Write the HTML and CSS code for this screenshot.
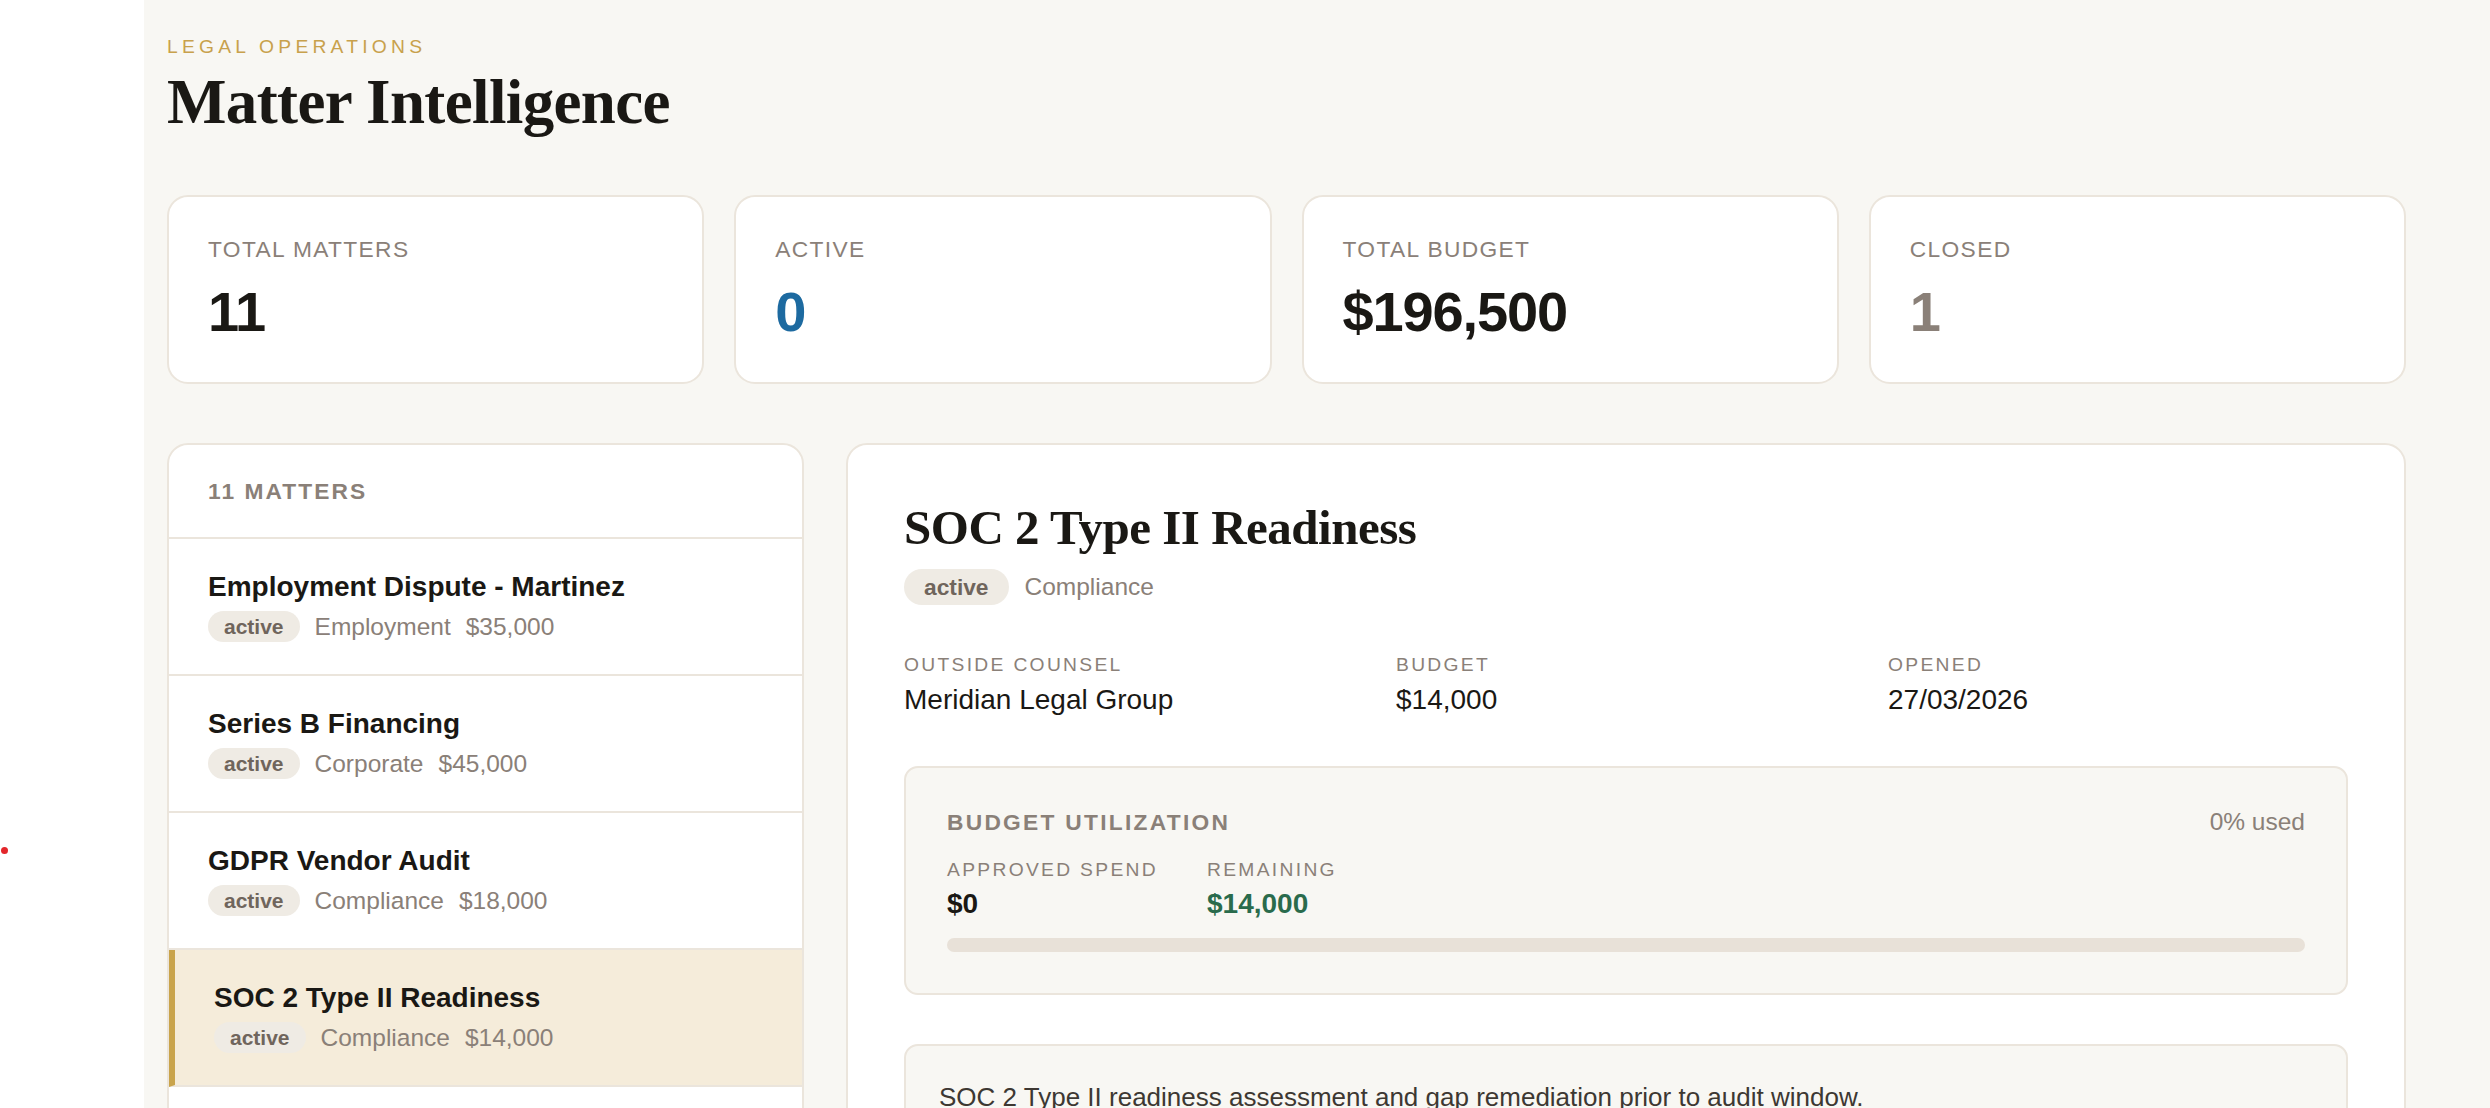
FILE: index.html
```html
<!DOCTYPE html>
<html lang="en">
<head>
<meta charset="utf-8">
<title>Matter Intelligence</title>
<link rel="stylesheet" href="styles.css">
</head>
<body>
  <aside class="sidebar"></aside>
  <main class="main">
    <div class="content">
      <header class="page-head">
        <p class="eyebrow">Legal Operations</p>
        <h1 class="page-title">Matter Intelligence</h1>
      </header>

      <section class="stats">
        <div class="stat-card">
          <div class="stat-label">Total Matters</div>
          <div class="stat-value">11</div>
        </div>
        <div class="stat-card">
          <div class="stat-label">Active</div>
          <div class="stat-value stat-value--blue">0</div>
        </div>
        <div class="stat-card">
          <div class="stat-label">Total Budget</div>
          <div class="stat-value">$196,500</div>
        </div>
        <div class="stat-card">
          <div class="stat-label">Closed</div>
          <div class="stat-value stat-value--muted">1</div>
        </div>
      </section>

      <section class="workspace">
        <div class="matter-list">
          <div class="list-head">11 Matters</div>
          <div class="matter-item">
            <div class="matter-name">Employment Dispute - Martinez</div>
            <div class="matter-meta"><span class="badge">active</span><span>Employment</span><span>$35,000</span></div>
          </div>
          <div class="matter-item">
            <div class="matter-name">Series B Financing</div>
            <div class="matter-meta"><span class="badge">active</span><span>Corporate</span><span>$45,000</span></div>
          </div>
          <div class="matter-item">
            <div class="matter-name">GDPR Vendor Audit</div>
            <div class="matter-meta"><span class="badge">active</span><span>Compliance</span><span>$18,000</span></div>
          </div>
          <div class="matter-item matter-item--selected">
            <div class="matter-name">SOC 2 Type II Readiness</div>
            <div class="matter-meta"><span class="badge">active</span><span>Compliance</span><span>$14,000</span></div>
          </div>
          <div class="matter-item matter-item--last"></div>
        </div>

        <article class="detail">
          <h2 class="detail-title">SOC 2 Type II Readiness</h2>
          <div class="detail-tags"><span class="badge badge--lg">active</span><span class="detail-cat">Compliance</span></div>

          <div class="fields">
            <div class="field">
              <div class="field-label">Outside Counsel</div>
              <div class="field-value">Meridian Legal Group</div>
            </div>
            <div class="field">
              <div class="field-label">Budget</div>
              <div class="field-value">$14,000</div>
            </div>
            <div class="field">
              <div class="field-label">Opened</div>
              <div class="field-value">27/03/2026</div>
            </div>
          </div>

          <div class="budget-box">
            <div class="budget-head">
              <span class="budget-title">Budget Utilization</span>
              <span class="budget-used">0% used</span>
            </div>
            <div class="budget-figures">
              <div class="figure">
                <div class="field-label">Approved Spend</div>
                <div class="figure-value">$0</div>
              </div>
              <div class="figure">
                <div class="field-label">Remaining</div>
                <div class="figure-value figure-value--green">$14,000</div>
              </div>
            </div>
            <div class="progress"><div class="progress-fill" style="width: 0%"></div></div>
          </div>

          <div class="desc-box">
            <p class="desc">SOC 2 Type II readiness assessment and gap remediation prior to audit window.</p>
          </div>
        </article>
      </section>
    </div>
  </main>
  <span class="dot"></span>
</body>
</html>
```

FILE: styles.css
```css
* {
  box-sizing: border-box;
}

html,
body {
  margin: 0;
  height: 100%;
  overflow: hidden;
}

body {
  display: flex;
  font-family: "Liberation Sans", Arial, sans-serif;
  color: #1a1814;
  background: #ffffff;
}

.sidebar {
  width: 144px;
  flex: 0 0 144px;
  background: #ffffff;
}

.main {
  flex: 1;
  background: #f8f7f3;
  padding: 36px 0 0 23px;
  overflow: hidden;
}

.content {
  max-width: 2239px;
}

/* header */
.eyebrow {
  margin: 0;
  font-size: 19.25px;
  line-height: 22px;
  letter-spacing: 0.22em;
  text-transform: uppercase;
  color: #c8a14c;
}

.page-title {
  margin: 10px 0 0;
  font-family: "Liberation Serif", "Times New Roman", serif;
  font-weight: 700;
  font-size: 63px;
  line-height: 1.1;
  letter-spacing: -0.01em;
  color: #1a1814;
}

/* stats */
.stats {
  margin-top: 58px;
  display: grid;
  grid-template-columns: repeat(4, 1fr);
  gap: 30px;
}

.stat-card {
  background: #ffffff;
  border: 2px solid #ebe5dc;
  border-radius: 21px;
  padding: 39px 39px 38px;
}

.stat-label {
  font-size: 22.75px;
  line-height: 26px;
  letter-spacing: 0.06em;
  text-transform: uppercase;
  color: #8a8078;
}

.stat-value {
  margin-top: 18px;
  font-size: 56px;
  line-height: 64px;
  font-weight: 700;
  letter-spacing: -0.02em;
  color: #1a1814;
}

.stat-value--blue {
  color: #1d6aa0;
}

.stat-value--muted {
  color: #8a8078;
}

/* workspace */
.workspace {
  margin-top: 59px;
  display: grid;
  grid-template-columns: 637px 1fr;
  gap: 42px;
  align-items: start;
}

.matter-list {
  background: #ffffff;
  border: 2px solid #ebe5dc;
  border-radius: 21px;
  overflow: hidden;
}

.list-head {
  padding: 33px 39px 33px;
  font-size: 22.75px;
  line-height: 26px;
  font-weight: 700;
  letter-spacing: 0.09em;
  text-transform: uppercase;
  color: #8a8078;
  border-bottom: 2px solid #ebe5dc;
}

.matter-item {
  padding: 30px 39px 32px;
  border-bottom: 2px solid #ebe5dc;
}

.matter-item--selected {
  background: #f5ecda;
  border-left: 6px solid #c9a44c;
}

.matter-item--last {
  height: 135px;
}

.matter-name {
  font-size: 28px;
  line-height: 36px;
  font-weight: 700;
  color: #1a1814;
}

.matter-meta {
  margin-top: 6px;
  display: flex;
  align-items: center;
  gap: 15px;
  font-size: 24.5px;
  line-height: 31px;
  color: #8a8078;
}

.badge {
  display: inline-block;
  padding: 3.5px 16px;
  border-radius: 999px;
  background: #efebe4;
  color: #6f655c;
  font-size: 21px;
  line-height: 24px;
  font-weight: 700;
}

.badge--lg {
  padding: 5px 20px;
  font-size: 22.75px;
  line-height: 26px;
}

/* detail */
.detail {
  background: #ffffff;
  border: 2px solid #ebe5dc;
  border-radius: 21px;
  padding: 56px 56px 56px;
}

.detail-title {
  margin: 0;
  font-family: "Liberation Serif", "Times New Roman", serif;
  font-weight: 700;
  font-size: 49px;
  line-height: 1.1;
  letter-spacing: -0.01em;
  color: #1a1814;
}

.detail-tags {
  margin-top: 14px;
  display: flex;
  align-items: center;
  gap: 16px;
}

.detail-cat {
  font-size: 24.5px;
  color: #8a8078;
}

.fields {
  margin-top: 49px;
  display: grid;
  grid-template-columns: repeat(3, 1fr);
  gap: 32px;
}

.field-label {
  font-size: 19.25px;
  line-height: 22px;
  letter-spacing: 0.12em;
  text-transform: uppercase;
  color: #8a8078;
}

.field-value {
  margin-top: 7.5px;
  font-size: 28px;
  line-height: 32px;
  color: #1a1814;
}

.budget-box {
  margin-top: 50px;
  background: #f8f7f3;
  border: 2px solid #ebe5dc;
  border-radius: 14px;
  padding: 42px 41px 41px;
}

.budget-head {
  display: flex;
  justify-content: space-between;
  align-items: center;
  height: 24px;
}

.budget-title {
  font-size: 22.75px;
  line-height: 24px;
  font-weight: 700;
  letter-spacing: 0.1em;
  text-transform: uppercase;
  color: #8a8078;
}

.budget-used {
  font-size: 24.5px;
  line-height: 24px;
  color: #8a8078;
}

.budget-figures {
  margin-top: 25px;
  display: flex;
  gap: 49px;
}

.figure-value {
  margin-top: 7px;
  font-size: 28px;
  line-height: 32px;
  font-weight: 700;
  color: #1a1814;
}

.figure-value--green {
  color: #2a6b4c;
}

.progress {
  margin-top: 18px;
  height: 14px;
  border-radius: 999px;
  background: #e8e1d8;
  overflow: hidden;
}

.progress-fill {
  height: 100%;
  background: #c9a44c;
}

.desc-box {
  margin-top: 49px;
  background: #f8f7f3;
  border: 2px solid #ebe5dc;
  border-radius: 14px;
  padding: 32px 33px;
}

.desc {
  margin: 0;
  font-size: 26px;
  line-height: 1.5;
  color: #3d3832;
}

.dot {
  position: fixed;
  left: 1px;
  top: 847px;
  width: 7px;
  height: 7px;
  border-radius: 50%;
  background: #e3262b;
}
```
